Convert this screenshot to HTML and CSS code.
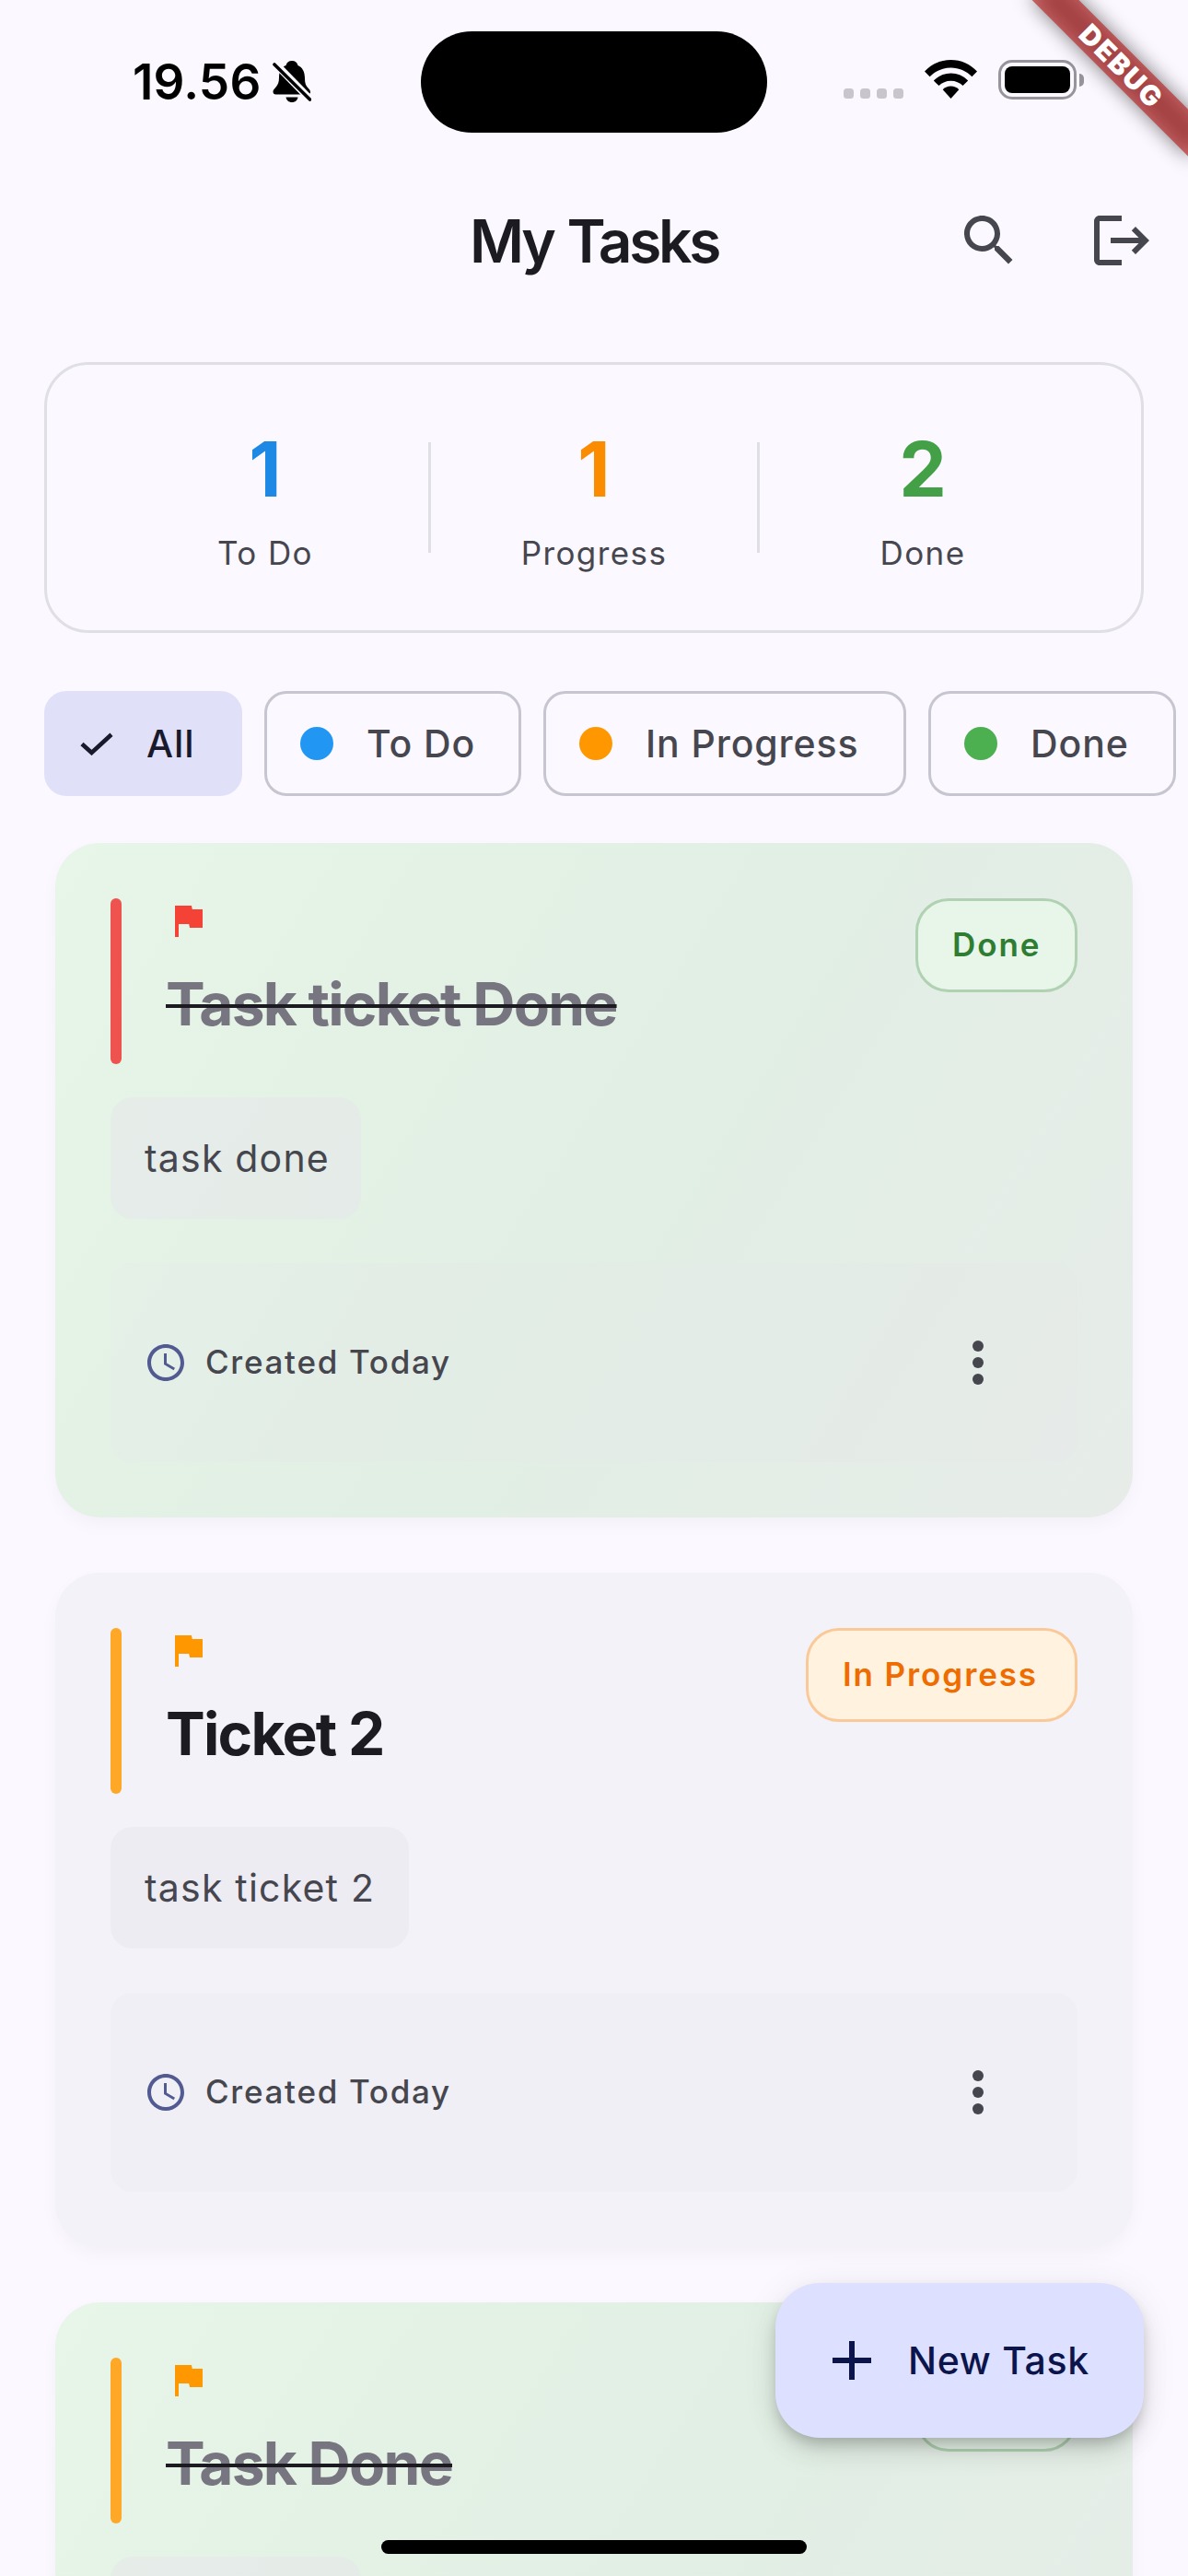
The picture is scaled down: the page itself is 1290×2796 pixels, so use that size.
FILE: index.html
```html
<!DOCTYPE html>
<html lang="en">
<head>
<meta charset="utf-8">
<title>My Tasks</title>
<link rel="stylesheet" href="styles.css">
</head>
<body>
<svg class="defs" width="0" height="0">
  <symbol id="flag" viewBox="0 0 24 24"><path d="M14.4 6 14 4H5v17h2v-7h5.600l.4 2h7V6z"/></symbol>
  <symbol id="clock" viewBox="0 0 24 24"><path d="M11.990 2C6.470 2 2 6.480 2 12s4.470 10 9.990 10C17.520 22 22 17.520 22 12S17.520 2 11.990 2zM12 20c-4.420 0-8-3.580-8-8s3.580-8 8-8 8 3.580 8 8-3.580 8-8 8zm.5-13H11v6l5.250 3.150.75-1.230-4.500-2.670z"/></symbol>
  <symbol id="more" viewBox="0 0 24 24"><circle cx="12" cy="6" r="2"/><circle cx="12" cy="12" r="2"/><circle cx="12" cy="18" r="2"/></symbol>
</svg>
<div class="screen">
  <div class="status">
    <span class="time">19.56</span>
    <svg class="bell" viewBox="0 0 42 45">
      <path d="M21 0c3.500 0 5.500 1.800 6.500 5 5 2 7.500 7 7.500 14 0 5 1 8 3.500 10.500 1.800 1.800 2.500 3 2.500 4.500 0 1.600-1 2.500-2.500 2.500H3.500C1.500 36.500.5 35.300.5 33.500c0-1.600.8-2.600 2.500-4.300C6 26 7 23 7 18c0-6.500 2.500-11 7.500-13C15.500 1.800 17.500 0 21 0z"/>
      <path d="M14.500 39.500h13c-.5 3.300-3 5.500-6.500 5.500s-6-2.200-6.500-5.500z"/>
      <path class="bell-gap" d="M1 1 42 43"/>
      <path class="bell-slash" d="M2 4 40.500 42"/>
    </svg>
    <div class="island"></div>
    <div class="signal"><i></i><i></i><i></i><i></i></div>
    <svg class="wifi" viewBox="0 0 57 42">
      <path d="M0 12.500C7.500 4.500 17.500 0 28.500 0S49.500 4.500 57 12.500l-5.600 5.700C45.300 12 37.300 8.500 28.500 8.500S11.700 12 5.600 18.200z"/>
      <path d="M9.800 22.500C14.800 17.300 21.300 14.500 28.500 14.500s13.700 2.800 18.700 8l-5.700 5.600c-3.400-3.500-7.900-5.400-13-5.400s-9.600 1.900-13 5.400z"/>
      <path d="M19.700 32.300c2.400-2.400 5.400-3.700 8.800-3.700s6.400 1.300 8.800 3.700L28.500 42z"/>
    </svg>
    <div class="battery"><div class="battery-shell"><div class="battery-fill"></div></div><div class="battery-cap"></div></div>
  </div>

  <header class="appbar">
    <h1>My Tasks</h1>
    <div class="actions">
      <svg viewBox="0 0 24 24"><path d="M15.500 14h-.79l-.28-.27C15.410 12.590 16 11.110 16 9.500 16 5.910 13.090 3 9.500 3S3 5.910 3 9.500 5.910 16 9.500 16c1.610 0 3.090-.59 4.230-1.570l.27.28v.79l5 4.990L20.490 19l-4.990-5zm-6 0C7.010 14 5 11.990 5 9.500S7.010 5 9.500 5 14 7.010 14 9.500 11.990 14 9.500 14z"/></svg>
      <svg viewBox="0 0 24 24"><path d="M17 7l-1.410 1.410L18.170 11H8v2h10.170l-2.580 2.580L17 17l5-5zM4 5h8V3H4c-1.100 0-2 .9-2 2v14c0 1.100.9 2 2 2h8v-2H4V5z"/></svg>
    </div>
  </header>

  <section class="summary">
    <div class="stat"><b class="n-todo">1</b><span>To Do</span></div>
    <div class="rule"></div>
    <div class="stat"><b class="n-progress">1</b><span>Progress</span></div>
    <div class="rule"></div>
    <div class="stat"><b class="n-done">2</b><span>Done</span></div>
  </section>

  <nav class="filters">
    <div class="filter filter-all"><svg viewBox="0 0 36 25"><path d="M2 12.500 12.500 22 34 2.300"/></svg><span>All</span></div>
    <div class="filter filter-todo"><i></i><span>To Do</span></div>
    <div class="filter filter-progress"><i></i><span>In Progress</span></div>
    <div class="filter filter-done"><i></i><span>Done</span></div>
  </nav>

  <main class="list">
    <article class="card card-done">
      <div class="head">
        <div class="bar bar-high"></div>
        <div class="title"><svg class="flag flag-high"><use href="#flag"/></svg><h2>Task ticket Done</h2></div>
        <div class="badge badge-done">Done</div>
      </div>
      <p class="desc desc-1">task done</p>
      <div class="foot"><svg class="clock"><use href="#clock"/></svg><span>Created Today</span><svg class="more"><use href="#more"/></svg></div>
    </article>
    <article class="card">
      <div class="head">
        <div class="bar"></div>
        <div class="title"><svg class="flag"><use href="#flag"/></svg><h2>Ticket 2</h2></div>
        <div class="badge badge-progress">In Progress</div>
      </div>
      <p class="desc desc-2">task ticket 2</p>
      <div class="foot"><svg class="clock"><use href="#clock"/></svg><span>Created Today</span><svg class="more"><use href="#more"/></svg></div>
    </article>
    <article class="card card-done">
      <div class="head">
        <div class="bar"></div>
        <div class="title"><svg class="flag"><use href="#flag"/></svg><h2>Task Done</h2></div>
        <div class="badge badge-done"></div>
      </div>
      <p class="desc desc-1"></p>
      <div class="foot"></div>
    </article>
  </main>

  <div class="fab"><svg viewBox="0 0 42 42"><path d="M21 0v42M0 21h42"/></svg><span>New Task</span></div>
  <div class="home"></div>
  <div class="debug"><div class="ribbon"><span>DEBUG</span></div></div>
</div>
</body>
</html>
```
FILE: styles.css
```css
* { box-sizing: border-box; margin: 0; padding: 0; }
body { background: #fbf8ff; }
.defs { display: block; position: absolute; }
.screen {
  position: relative;
  width: 1290px;
  height: 2796px;
  overflow: hidden;
  background: #fbf8ff;
  color: #46464f;
  font-family: Inter, "Liberation Sans", sans-serif;
  white-space: nowrap;
}

/* status bar */
.status { display: flex; height: 177px; padding-left: 144px; align-items: flex-start; color: #000; }
.time { width: 152px; margin-top: 57px; font-size: 53px; line-height: 64px; font-weight: 600; letter-spacing: .2px; }
.bell { width: 42px; height: 45px; margin-top: 66px; }
.bell-gap { fill: none; stroke: #fbf8ff; stroke-width: 8; }
.bell-slash { fill: none; stroke: #000; stroke-width: 3.6; stroke-linecap: round; }
.island { width: 376px; height: 110px; margin: 34px 0 0 119px; border-radius: 55px; background: #000; }
.signal { display: flex; gap: 7px; margin: 96px 0 0 83px; }
.signal i { width: 11px; height: 11px; border-radius: 3.5px; background: #c8c6cc; }
.wifi { width: 57px; height: 42px; margin: 65px 0 0 23px; }
.battery { display: flex; align-items: center; gap: 3px; margin: 65px 0 0 23px; }
.battery-shell { width: 85px; height: 43px; padding: 4px; border: 3px solid #97959b; border-radius: 15px; }
.battery-fill { height: 29px; border-radius: 8px; background: #000; }
.battery-cap { width: 5px; height: 14px; border-radius: 0 5px 5px 0; background: #97959b; }

/* app bar */
.appbar { display: grid; grid-template-columns: 1fr auto 1fr; height: 168px; align-items: center; }
.appbar h1 { grid-column: 2; padding-top: 2px; font-size: 64px; font-weight: 600; line-height: 80px; letter-spacing: -3.3px; word-spacing: 2px; color: #1b1b21; }
.actions { display: flex; justify-content: flex-end; gap: 72px; padding-right: 36px; }
.actions svg { width: 72px; height: 72px; fill: #46464f; }

/* summary */
.summary {
  display: flex;
  align-items: center;
  height: 294px;
  margin: 48px 48px 0;
  padding: 0 60px;
  border: 3px solid #e0dfe6;
  border-radius: 48px;
}
.stat { flex: 1; display: flex; flex-direction: column; align-items: center; gap: 12px; }
.stat b { font-size: 82px; line-height: 108px; font-weight: 700; }
.stat span { font-size: 35px; line-height: 48px; letter-spacing: 1.4px; }
.n-todo { color: #1e88e5; }
.n-progress { color: #fb8c00; }
.n-done { color: #43a047; }
.rule { width: 3px; height: 120px; background: #e0dfe6; }

/* filters */
.filters { display: flex; gap: 24px; margin: 63px 0 0 48px; }
.filter {
  display: flex;
  align-items: center;
  height: 114px;
  padding-left: 36px;
  gap: 36px;
  border: 3px solid #c7c5d0;
  border-radius: 24px;
  font-size: 41px;
  font-weight: 500;
  letter-spacing: .9px;
}
.filter i { width: 36px; height: 36px; border-radius: 50%; }
.filter svg { width: 36px; height: 25px; fill: none; stroke: #181a2c; stroke-width: 4.6; }
.filter-all { width: 215px; border-color: #e0e0f9; background: #e0e0f9; color: #181a2c; }
.filter-todo { width: 279px; }
.filter-todo i { background: #2196f3; }
.filter-progress { width: 394px; }
.filter-progress i { background: #ff9800; }
.filter-done { width: 269px; }
.filter-done i { background: #4caf50; }

/* task cards */
.list { display: flex; flex-direction: column; gap: 60px; padding: 51px 60px 0; }
.card {
  height: 732px;
  padding: 60px;
  border-radius: 48px;
  background: #f4f2f9;
  box-shadow: 0 8px 22px -3px rgba(0, 0, 0, .045);
}
.card-done { background: linear-gradient(122deg, #e8f6e9, #e1efe4 50%, #e7ece9); }
.head { display: flex; align-items: flex-start; height: 180px; }
.bar { width: 12px; height: 180px; border-radius: 6px; background: #ffa726; }
.bar-high { background: #ef5350; }
.title { flex: 1; margin-left: 48px; }
.flag { display: block; width: 48px; height: 48px; margin-bottom: 24px; fill: #ff9800; }
.flag-high { fill: #f44336; }
.title h2 { font-size: 64px; line-height: 86px; font-weight: 700; letter-spacing: -1.75px; color: #1b1b21; }
.card-done h2 { color: #777680; text-decoration: line-through #1b1b21 4px; }
.badge {
  height: 102px;
  padding: 0 37px;
  border: 3px solid;
  border-radius: 36px;
  font-size: 35px;
  line-height: 94px;
  font-weight: 600;
  letter-spacing: 1.9px;
}
.badge-done { width: 176px; color: #2e7d32; background: #e8f5e9; border-color: #b0d2b2; }
.badge-progress { width: 295px; color: #ef6c00; background: #fff3e0; border-color: #fac999; }
.desc {
  height: 132px;
  margin: 36px 0 48px;
  padding-left: 37px;
  border-radius: 24px;
  background: rgba(230, 228, 235, .45);
  font-size: 41px;
  line-height: 132px;
  letter-spacing: 1.2px;
}
.desc-1 { width: 272px; }
.desc-2 { width: 324px; }
.foot {
  display: flex;
  align-items: center;
  height: 216px;
  padding: 0 72px 0 36px;
  border-radius: 24px;
  background: rgba(230, 228, 235, .24);
  font-size: 35px;
  font-weight: 500;
  letter-spacing: 1.7px;
}
.foot span { margin-bottom: 2px; }
.clock { width: 48px; height: 48px; margin-right: 19px; fill: #525a92; }
.more { width: 72px; height: 72px; margin-left: auto; fill: #46464f; }

/* overlays */
.fab {
  position: absolute;
  left: 842px;
  top: 2478px;
  display: flex;
  align-items: center;
  width: 400px;
  height: 168px;
  padding-left: 62px;
  gap: 40px;
  border-radius: 48px;
  background: #dee0ff;
  color: #0b154b;
  font-size: 41px;
  font-weight: 500;
  letter-spacing: .7px;
  box-shadow: 0 9px 15px -3px rgba(0, 0, 0, .2), 0 18px 30px rgba(0, 0, 0, .08), 0 3px 42px rgba(0, 0, 0, .07);
}
.fab svg { width: 42px; height: 42px; stroke: #0b154b; stroke-width: 6; }
.home { position: absolute; left: 414px; top: 2757px; width: 462px; height: 15px; border-radius: 8px; background: #000; }
.debug { position: absolute; right: 0; top: 0; width: 300px; height: 300px; overflow: hidden; }
.ribbon {
  position: absolute;
  left: 108px;
  top: 54px;
  width: 240px;
  height: 36px;
  transform: rotate(45deg);
  color: #fff;
  font-size: 30px;
  line-height: 36px;
  font-weight: 900;
  letter-spacing: 2px;
  text-align: center;
}
.ribbon::before { content: ""; position: absolute; inset: 0; background: rgba(0, 0, 0, .5); filter: blur(10.900px); }
.ribbon::after { content: ""; position: absolute; inset: 0; background: rgba(183, 28, 28, .63); }
.ribbon span { position: relative; z-index: 1; }
```
